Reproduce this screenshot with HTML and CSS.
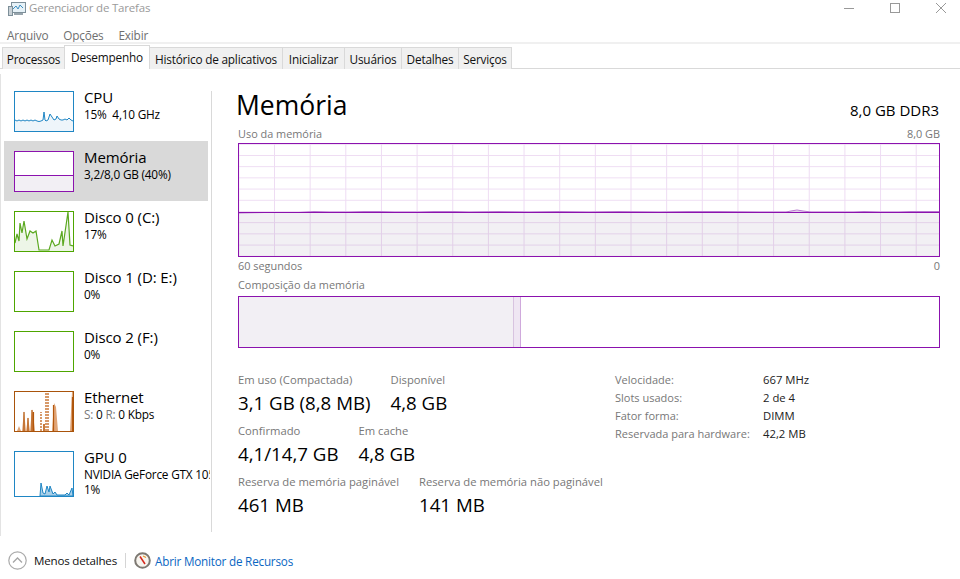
FILE: index.html
```html
<!DOCTYPE html>
<html lang="pt">
<head>
<meta charset="utf-8">
<title>Gerenciador de Tarefas</title>
<link rel="stylesheet" href="styles.css">
</head>
<body>
<div class="window">
  <header class="titlebar">
    <svg class="appicon" width="18" height="16" viewBox="0 0 18 16"><rect x="3.5" y="1.5" width="14" height="10" fill="#e6f1f7" stroke="#7d8f99"/><path d="M5 8l3-3 2 3 2-4 3 3" fill="none" stroke="#3f8fc0"/><rect x="0.5" y="5.5" width="4" height="9" fill="#c9d1d6" stroke="#7d8f99"/><rect x="6" y="12" width="9" height="2" fill="#98a5ad"/></svg>
    <span class="apptitle">Gerenciador de Tarefas</span>
    <div class="winctl">
      <svg width="12" height="12" viewBox="0 0 12 12"><path d="M1 6.5h10" stroke="#999" fill="none"/></svg>
      <svg width="12" height="12" viewBox="0 0 12 12"><rect x="1.5" y="1.5" width="9" height="9" stroke="#999" fill="none"/></svg>
      <svg width="12" height="12" viewBox="0 0 12 12"><path d="M1 1l10 10M11 1L1 11" stroke="#999" fill="none"/></svg>
    </div>
  </header>
  <nav class="menubar"><span>Arquivo</span><span>Opções</span><span>Exibir</span></nav>
  <div class="tabs">
    <div class="tab t1">Processos</div>
    <div class="tab active t2">Desempenho</div>
    <div class="tab t3">Histórico de aplicativos</div>
    <div class="tab t4">Inicializar</div>
    <div class="tab t5">Usuários</div>
    <div class="tab t6">Detalhes</div>
    <div class="tab t7">Serviços</div>
  </div>
  <div class="content">
    <aside class="sidebar">
      <div class="item">
        <svg class="thumb blue" width="60" height="41" viewBox="0 0 58 39"><path d="M0 28l2 1 2-1 2 1 2-1 2 1 2-1 2 1 2-1 2 1 2-1 2 1 2 .5 2-.5 2-1 1-8 1 8 1 1 2-1 2-6 2 3 2 3 2-1 1-3 2 3 2 1 2 0 2-1 2 1 2-2 2 2 2 1 2-1 1-4 1 4 2-1 2 1V39H0z" fill="#eef5fa"/><path d="M0 28l2 1 2-1 2 1 2-1 2 1 2-1 2 1 2-1 2 1 2-1 2 1 2 .5 2-.5 2-1 1-8 1 8 1 1 2-1 2-6 2 3 2 3 2-1 1-3 2 3 2 1 2 0 2-1 2 1 2-2 2 2 2 1 2-1 1-4 1 4 2-1 2 1" fill="none" stroke="#1f86c4"/></svg>
        <div class="itext"><div class="iname">CPU</div><div class="isub">15%&nbsp; 4,10 GHz</div></div>
      </div>
      <div class="item selected">
        <svg class="thumb purple" width="60" height="41" viewBox="0 0 58 39"><rect y="23" width="58" height="16" fill="#f2eff4"/><path d="M0 23.5h58" stroke="#8b12ae" fill="none"/></svg>
        <div class="itext"><div class="iname">Memória</div><div class="isub">3,2/8,0 GB (40%)</div></div>
      </div>
      <div class="item">
        <svg class="thumb green" width="60" height="41" viewBox="0 0 58 39"><path d="M0 31L2 22 4 29 5 11 7 21 9 9 12 27 15 19 18 21 21 19 24 38H27L28 38H34L37 28 40 34 44 32 47 19 48 34 53 0 55 33 58 34V39H0z" fill="#edf5e7"/><path d="M0 31L2 22 4 29 5 11 7 21 9 9 12 27 15 19 18 21 21 19 24 38H27L28 38H34L37 28 40 34 44 32 47 19 48 34 53 0 55 33 58 34" fill="none" stroke="#5aa81f" stroke-width="1.2"/></svg>
        <div class="itext"><div class="iname">Disco 0 (C:)</div><div class="isub">17%</div></div>
      </div>
      <div class="item">
        <svg class="thumb green" width="60" height="41" viewBox="0 0 58 39"></svg>
        <div class="itext"><div class="iname">Disco 1 (D: E:)</div><div class="isub">0%</div></div>
      </div>
      <div class="item">
        <svg class="thumb green" width="60" height="41" viewBox="0 0 58 39"></svg>
        <div class="itext"><div class="iname">Disco 2 (F:)</div><div class="isub">0%</div></div>
      </div>
      <div class="item">
        <svg class="thumb orange" width="60" height="41" viewBox="0 0 58 39"><path d="M2 39L4 34 6 39ZM7 39L9 19 11 39ZM11 39L13 25 15 39ZM15 39L17 17 18 22 20 39ZM37 39L39 11 41 15 43 39ZM55 39L57 0H58V39Z" fill="#e0a577"/><path d="M9 39V20M13 39V26M17 39V18M18.5 39V20M38.500 39V13M57.500 39V5" fill="none" stroke="#b3570c" stroke-width="1.2"/><path d="M26 39V20M31 39V0M33 39V0" fill="none" stroke="#c2631a" stroke-dasharray="2 1" stroke-width="1.3"/><path d="M28 39V32H30V39Z" fill="#c77a3c"/></svg>
        <div class="itext"><div class="iname">Ethernet</div><div class="isub"><span class="mut">S:</span> 0 <span class="mut">R:</span> 0 Kbps</div></div>
      </div>
      <div class="item gpu">
        <svg class="thumb blue" width="60" height="46" viewBox="0 0 58 44"><path d="M25 44l1-13 2 10 2 1 2-8 2 6 1-6 3 8 2-2 2 3h8l2-2 2 2 3-7 1 8z" fill="#a9cfe8" stroke="#1f86c4" stroke-width="1"/></svg>
        <div class="itext"><div class="iname">GPU 0</div><div class="isub clip">NVIDIA GeForce GTX 1050</div><div class="isub">1%</div></div>
      </div>
    </aside>
    <main class="main">
      <div class="heading"><h1>Memória</h1><div class="hright">8,0 GB DDR3</div></div>
      <div class="cap"><span>Uso da memória</span><span>8,0 GB</span></div>
      <svg class="chart" width="702" height="114" viewBox="0 0 700 112">
        <defs><pattern id="grid" width="35.65" height="11.2" patternUnits="userSpaceOnUse" x="35" y="11"><path d="M.5 0V11.2M0 .5H35.65" stroke="#eedcf3" fill="none"/></pattern></defs>
        <rect width="700" height="112" fill="url(#grid)"/>
        <path d="M0 69L25 68.500 60 68.500 75 67.500 90 68 110 68 125 67.500 140 67.500 155 68 180 68 195 67.500 215 67.500 230 68 260 67.500 290 68 320 67.500 350 68 380 67.500 420 68 450 67.500 480 67.500 520 68 547 68 552 67 558 66 564 67 572 68 615 68 625 67.500 640 68 660 68 672 67.500 700 67.500V112H0Z" fill="rgb(90,70,110)" fill-opacity=".08"/>
        <path d="M0 69L25 68.500 60 68.500 75 67.500 90 68 110 68 125 67.500 140 67.500 155 68 180 68 195 67.500 215 67.500 230 68 260 67.500 290 68 320 67.500 350 68 380 67.500 420 68 450 67.500 480 67.500 520 68 547 68 552 67 558 66 564 67 572 68 615 68 625 67.500 640 68 660 68 672 67.500 700 67.500" fill="none" stroke="#b878d0"/>
        <path d="M0 68.500H700" fill="none" stroke="#8b12ae"/>
      </svg>
      <div class="cap below"><span>60 segundos</span><span>0</span></div>
      <div class="cap comp"><span>Composição da memória</span></div>
      <div class="compbar"><div class="inuse"></div><div class="modified"></div></div>
      <section class="details">
        <div class="stats">
          <div class="row">
            <div><div class="lab">Em uso (Compactada)</div><div class="val">3,1 GB (8,8 MB)</div></div>
            <div><div class="lab">Disponível</div><div class="val">4,8 GB</div></div>
          </div>
          <div class="row">
            <div><div class="lab">Confirmado</div><div class="val">4,1/14,7 GB</div></div>
            <div><div class="lab">Em cache</div><div class="val">4,8 GB</div></div>
          </div>
          <div class="row">
            <div><div class="lab">Reserva de memória paginável</div><div class="val">461 MB</div></div>
            <div><div class="lab">Reserva de memória não paginável</div><div class="val">141 MB</div></div>
          </div>
        </div>
        <dl class="props">
          <dt>Velocidade:</dt><dd>667 MHz</dd>
          <dt>Slots usados:</dt><dd>2 de 4</dd>
          <dt>Fator forma:</dt><dd>DIMM</dd>
          <dt>Reservada para hardware:</dt><dd>42,2 MB</dd>
        </dl>
      </section>
    </main>
  </div>
  <footer class="footer">
    <svg class="chev" width="19" height="19" viewBox="0 0 19 19"><circle cx="9.5" cy="9.5" r="8.7" fill="#fff" stroke="#aaa" stroke-width="1.2"/><path d="M5 11.500l4.500-4.500 4.500 4.500" fill="none" stroke="#a5a5a5" stroke-width="1.3"/></svg>
    <span class="less">Menos detalhes</span>
    <span class="vsep"></span>
    <svg class="rm" width="17" height="17" viewBox="0 0 17 17"><circle cx="8.500" cy="8.500" r="7.300" fill="#f7f4ee" stroke="#7d7972" stroke-width="2"/><path d="M6 4.500l5 7.500" stroke="#d4281c" stroke-width="1.500" fill="none"/><path d="M9 4l3 1.500" stroke="#e79a2f" stroke-width="1.200" fill="none"/></svg>
    <span class="link">Abrir Monitor de Recursos</span>
  </footer>
</div>
</body>
</html>
```

FILE: styles.css
```css
* { box-sizing: border-box; }
html, body { margin: 0; padding: 0; background: #fff; }
body { font-family: "Open Sans", "Noto Sans", sans-serif; color: #000; font-size: 11.8px; letter-spacing: -0.2px; }
.window { width: 960px; height: 579px; overflow: hidden; display: flex; flex-direction: column; }

.titlebar { height: 27px; flex: none; display: flex; align-items: flex-start; padding-left: 8px; }
.appicon { margin-top: 1px; }
.apptitle { margin-left: 3px; color: #9a9a9a; line-height: 16px; font-size: 11.5px; }
.winctl { margin-left: auto; display: flex; padding-right: 8px; gap: 34px; padding-top: 2px; margin-right: 5px; }

.menubar { height: 15px; flex: none; display: flex; gap: 15px; padding-left: 7px; color: #6f6f6f; line-height: 16px; }

.tabs { height: 27px; flex: none; border-top: 2px solid #f0f0f0; border-bottom: 1px solid #d9d9d9; display: flex; padding: 2px 0 0 2px; align-items: stretch; }
.tab { height: 22px; margin-top: 1px; background: #f0f0f0; border: 1px solid #d9d9d9; border-bottom: 0; border-left: 0; text-align: center; line-height: 22px; color: #111; }
.t1 { width: 63px; border-left: 1px solid #d9d9d9; }
.t2 { width: 85px; }
.t3 { width: 133px; }
.t4 { width: 62px; }
.t5 { width: 57px; }
.t6 { width: 57px; }
.t7 { width: 53px; }
.tab.active { background: #fff; height: 24px; margin-top: -1px; line-height: 22px; position: relative; border-left: 1px solid #d9d9d9; margin-left: -1px; width: 86px; }

.content { flex: none; display: flex; height: 468px; }
.sidebar { width: 212px; height: 462px; flex: none; border-left: 1px solid #e3e3e3; padding: 7px 3px 0 3px; position: relative; margin-top: 5px; overflow: hidden; }
.sidebar::after { content: ""; position: absolute; right: 0; top: 17px; bottom: 4px; width: 1px; background: #d9d9d9; }
.item { height: 60px; width: 204px; display: flex; padding: 10px 0 0 10px; }
.item.selected { background: #d9d9d9; }
.item.gpu { width: 207px; overflow: hidden; }
.thumb { flex: none; background: #fff; border: 1px solid; overflow: hidden; }
.blue { border-color: #1f86c4; }
.purple { border-color: #8b12ae; }
.green { border-color: #4ea600; }
.orange { border-color: #a9540b; }
.itext { margin-left: 10px; margin-top: -4px; white-space: nowrap; }
.iname { font-size: 15px; line-height: 20px; letter-spacing: -0.1px; }
.isub { line-height: 15px; }
.clip { width: 126px; overflow: hidden; }
.mut { color: #777; }

.main { flex: 1; padding: 16px 20px 0 26px; }
.heading { display: flex; justify-content: space-between; align-items: flex-end; height: 38px; }
.heading h1 { margin: 0 0 0 -2px; font-weight: 400; font-size: 26.5px; line-height: 36px; letter-spacing: 0; }
.hright { font-size: 15px; line-height: 20px; margin: 0 1px 3px 0; letter-spacing: 0; }
.cap { display: flex; justify-content: space-between; font-size: 10.9px; line-height: 14px; color: #777; margin-top: 4px; height: 15px; letter-spacing: 0; }
.chart { display: block; border: 1px solid #8b12ae; margin: 1px 0 0; width: 702px; height: 114px; }
.below { margin-top: 2px; }
.comp { margin-top: 4px; }
.compbar { height: 52px; border: 1px solid #8b12ae; margin-top: 3px; display: flex; width: 702px; }
.inuse { width: 275px; background: #f2eff4; border-right: 1px solid #d8c3e0; }
.modified { width: 7px; background: #efe6f3; border-right: 1px solid #cfa9dc; }

.details { display: flex; margin-top: 24px; }
.stats { width: 377px; flex: none; }
.row { display: flex; gap: 20px; height: 51px; }
.lab { font-size: 11.25px; line-height: 15px; color: #777; letter-spacing: 0; }
.val { font-size: 18.7px; line-height: 30px; margin-top: 1px; letter-spacing: 0; }
.props { margin: 0; display: grid; grid-template-columns: 148px auto; grid-auto-rows: 18px; font-size: 11px; line-height: 15px; letter-spacing: 0; }
.props dt { color: #777; }
.props dd { margin: 0; color: #222; font-size: 11.3px; }

.footer { height: 42px; flex: none; display: flex; align-items: center; padding: 5px 0 0 8px; font-size: 11.6px; }
.less { margin-left: 7px; color: #111; }
.vsep { width: 1px; height: 15px; background: #d5d5d5; margin: 0 8px; }
.rm { flex: none; }
.link { color: #0a66c2; margin-left: 4px; font-size: 11.7px; }
```
